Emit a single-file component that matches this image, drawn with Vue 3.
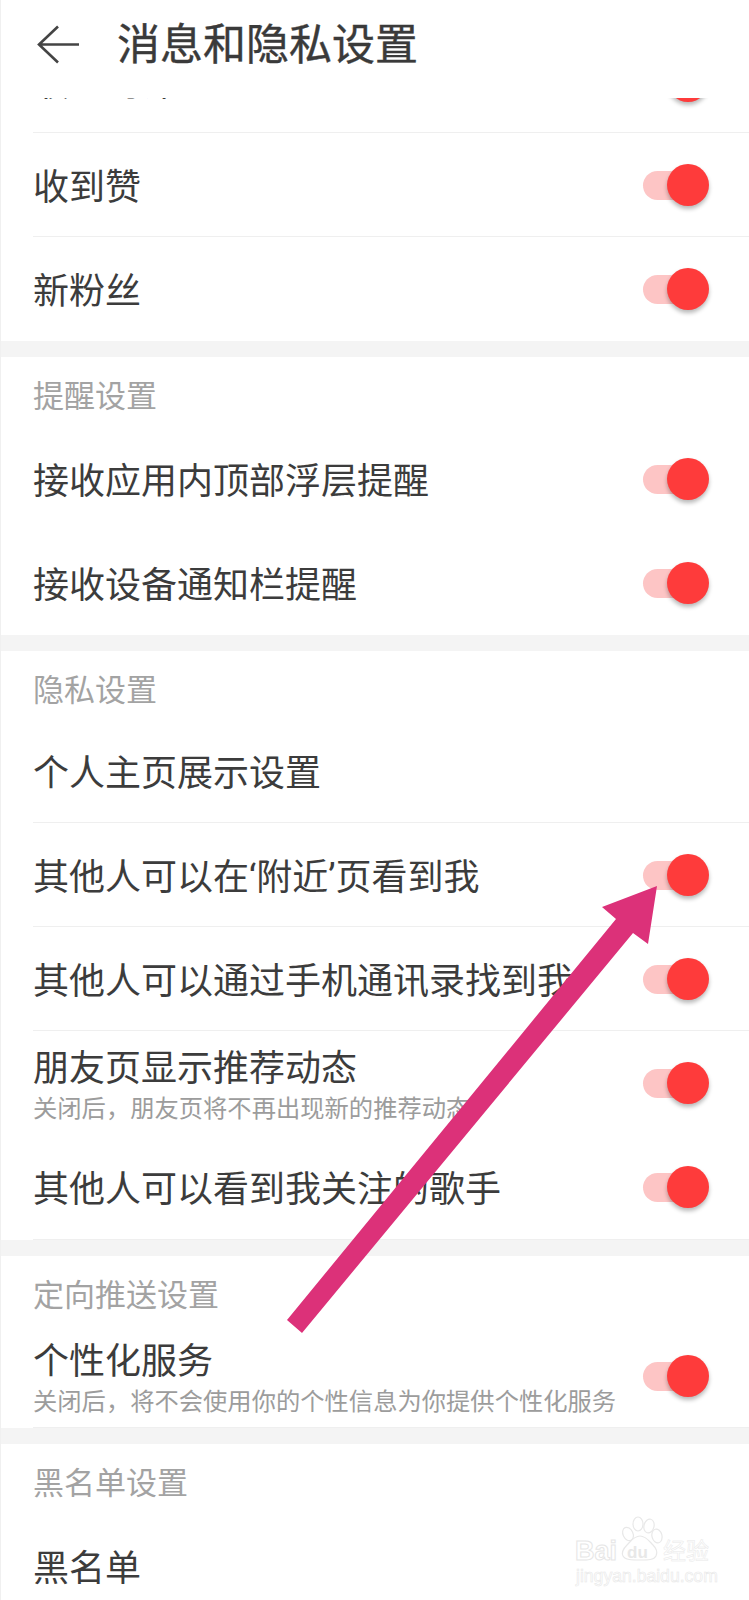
<template>
  <div class="page">
    <header class="top">
      <svg class="back" width="44" height="40" viewBox="0 0 44 40">
        <path d="M43 19.5H3M22 1.5L3 19.5l19 18" fill="none" stroke="#444" stroke-width="2.6" />
      </svg>
      <h1 class="page-title">消息和隐私设置</h1>
    </header>

    <main class="list">
      <section v-for="sec in sections" :key="sec.id" class="section" :class="sec.id">
        <h2 v-if="sec.title" class="sec-title" :class="{ wide: sec.wide }">{{ sec.title }}</h2>
        <div
          v-for="item in sec.items"
          :key="item.text"
          class="row"
          :class="{ line: item.line, closed: item.closed }"
        >
          <div class="text" :class="{ double: item.sub }">
            <div class="label">{{ item.text }}</div>
            <div v-if="item.sub" class="sub">{{ item.sub }}</div>
          </div>
          <span v-if="item.on" class="switch"><i class="track"></i><i class="knob"></i></span>
        </div>
      </section>
    </main>

    <!-- annotation drawn over the screenshot -->
    <svg class="arrow" width="749" height="1600" viewBox="0 0 749 1600">
      <polygon points="287,1320 302,1333 633,933 648,944 657,886 602,907 616,919" fill="#dc3179" />
    </svg>

    <!-- watermark -->
    <div class="mark">
      <svg class="paw" width="60" height="50" viewBox="0 0 60 50">
        <g fill="#fff" stroke="#e8e8e8" stroke-width="1.2">
          <ellipse cx="11" cy="18" rx="5" ry="7" transform="rotate(-25 11 18)" />
          <ellipse cx="21" cy="8" rx="5" ry="7" />
          <ellipse cx="32" cy="10" rx="5" ry="7" transform="rotate(15 32 10)" />
          <ellipse cx="40" cy="20" rx="5" ry="7" transform="rotate(-15 40 20)" />
          <path d="M23 20c6 0 9 5 13 9 4 4 5 7 3 11-2 4-8 4-16 4s-15 0-17-4c-2-4 0-7 4-11 4-4 7-9 13-9z" />
        </g>
      </svg>
      <div class="mark-top">
        <span class="bai">Bai</span>
        <span class="du">du</span>
        <span class="jy">经验</span>
      </div>
      <div class="mark-url">jingyan.baidu.com</div>
    </div>
  </div>
</template>

<script setup>
const sections = [
  {
    id: 'first',
    items: [
      { text: '收到的评论', on: true, line: true },
      { text: '收到赞', on: true, line: true },
      { text: '新粉丝', on: true }
    ]
  },
  {
    id: 'remind',
    title: '提醒设置',
    wide: true,
    items: [
      { text: '接收应用内顶部浮层提醒', on: true },
      { text: '接收设备通知栏提醒', on: true }
    ]
  },
  {
    id: 'privacy',
    title: '隐私设置',
    items: [
      { text: '个人主页展示设置', line: true },
      { text: '其他人可以在‘附近’页看到我', on: true, line: true },
      { text: '其他人可以通过手机通讯录找到我', on: true, line: true },
      { text: '朋友页显示推荐动态', sub: '关闭后，朋友页将不再出现新的推荐动态', on: true },
      { text: '其他人可以看到我关注的歌手', on: true, line: true, closed: true }
    ]
  },
  {
    id: 'push',
    title: '定向推送设置',
    items: [
      {
        text: '个性化服务',
        sub: '关闭后，将不会使用你的个性信息为你提供个性化服务',
        on: true,
        line: true
      }
    ]
  },
  {
    id: 'block',
    title: '黑名单设置',
    wide: true,
    items: [{ text: '黑名单' }]
  }
]
</script>

<style>
html, body {
  background: #fff;
}
</style>

<style scoped>
.page {
  position: relative;
  box-sizing: border-box;
  width: 749px;
  height: 1600px;
  overflow: hidden;
  background: #f4f4f4;
  border-left: 1px solid #f0f0f0;
  font-family: Roboto, "Noto Sans CJK SC", sans-serif;
  color: #3c3c3c;
}
.top {
  position: relative;
  z-index: 2;
  display: flex;
  align-items: center;
  height: 98px;
  padding-left: 35px;
  background: #fff;
}
.back {
  flex: none;
  margin-top: -9px;
}
.page-title {
  margin: -9px 0 0 37px;
  font-size: 43px;
  font-weight: 400;
  line-height: 40px;
  color: #3a3a3a;
  -webkit-text-stroke: 0.4px #3a3a3a;
}
.list {
  display: flex;
  flex-direction: column;
  gap: 16px;
}
.section {
  background: #fff;
}
.first {
  margin-top: -69px;
}
.sec-title {
  box-sizing: border-box;
  height: 68px;
  margin: 0;
  padding: 20px 0 0 32px;
  font-size: 31px;
  font-weight: 400;
  line-height: 40px;
  color: #a3a3a3;
}
.sec-title.wide {
  height: 70px;
}
.row {
  box-sizing: border-box;
  display: flex;
  align-items: center;
  justify-content: space-between;
  height: 104px;
  margin-left: 32px;
  padding-right: 40px;
}
.row.line {
  border-bottom: 1px solid #efefef;
}
.row.closed {
  height: 105px;
}
.text {
  min-width: 0;
  padding-top: 6px;
  white-space: nowrap;
}
.text.double {
  padding-top: 12px;
}
.label {
  font-size: 36px;
  line-height: 40px;
}
.sub {
  font-size: 24.3px;
  line-height: 40px;
  color: #9c9c9c;
}
.switch {
  position: relative;
  flex: none;
  width: 66px;
  height: 42px;
}
.track {
  position: absolute;
  left: 0;
  top: 7px;
  width: 58px;
  height: 29px;
  border-radius: 15px;
  background: #fdc5c5;
}
.knob {
  position: absolute;
  right: 0;
  top: 0;
  width: 42px;
  height: 42px;
  border-radius: 50%;
  background: #fe3b3b;
  box-shadow: 0 3px 4px rgba(0, 0, 0, 0.28);
}
.arrow {
  position: absolute;
  left: -1px;
  top: 0;
  z-index: 3;
}
.mark {
  position: absolute;
  left: 574px;
  top: 1516px;
  z-index: 4;
  width: 140px;
  height: 70px;
  font-family: "Liberation Sans", "Noto Sans CJK SC", sans-serif;
}
.paw {
  position: absolute;
  left: 42px;
  top: 0;
}
.mark-top {
  position: absolute;
  left: 0;
  top: 20px;
  width: 140px;
  height: 30px;
  line-height: 30px;
}
.bai, .du, .jy {
  position: absolute;
  top: 0;
  color: #fff;
  -webkit-text-stroke: 1px #e6e6e6;
}
.bai {
  left: 0;
  font-size: 27px;
  font-weight: 700;
}
.du {
  left: 52px;
  top: 2px;
  font-size: 17px;
  font-weight: 700;
  color: #e8e8e8;
  -webkit-text-stroke: 0;
}
.jy {
  left: 88px;
  font-size: 23px;
  -webkit-text-stroke: 0.5px #e8e8e8;
}
.mark-url {
  position: absolute;
  left: 1px;
  top: 50px;
  font-size: 17.6px;
  line-height: 20px;
  color: #fff;
  -webkit-text-stroke: 0.6px #e8e8e8;
}
</style>
